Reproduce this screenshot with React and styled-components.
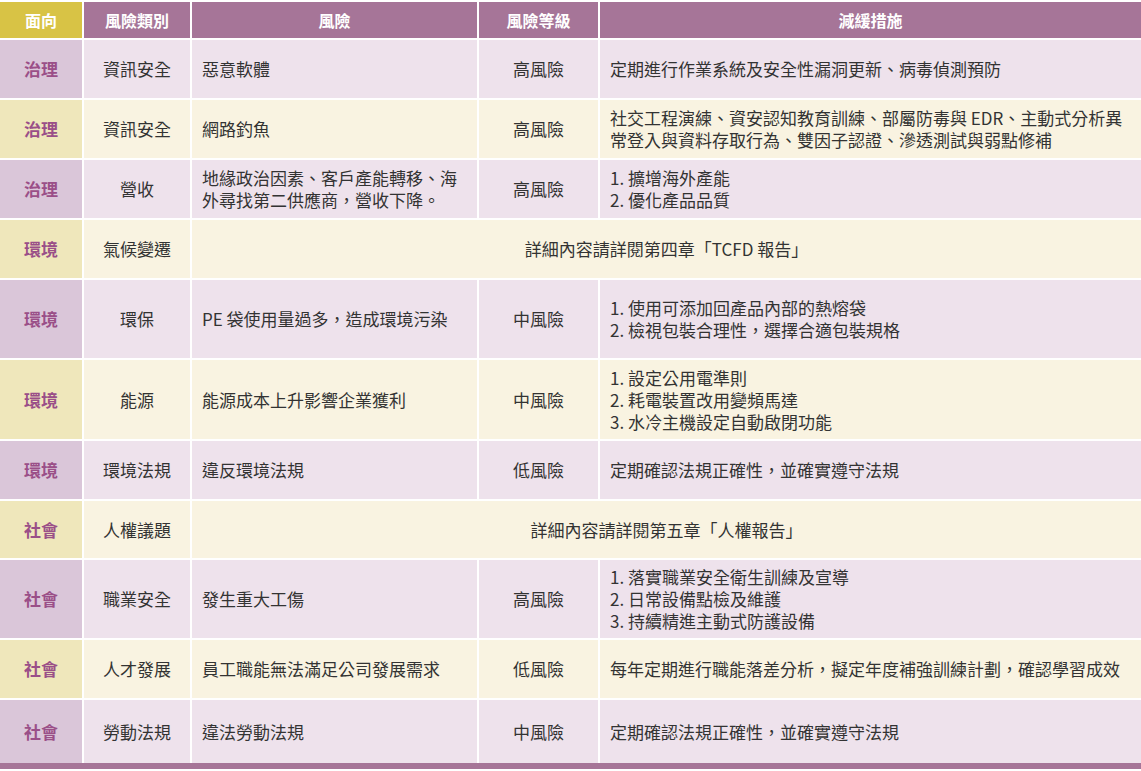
import React from "react";
import styled, { createGlobalStyle } from "styled-components";

const G = createGlobalStyle`
  html,body{margin:0;padding:0;background:#fff;}
  body{font-family:"Noto Sans CJK TC","Noto Sans CJK SC",sans-serif;}
`;
const Wrap = styled.div`padding-top:2px;width:1141px;`;
const Table = styled.table`
  width:1141px;border-collapse:collapse;table-layout:fixed;
  border-bottom:6px solid #a67598;
`;
const Th = styled.th`
  background:${p=>p.gold?"#d8c345":"#a67598"};color:#fff;font-weight:700;font-size:16px;
  height:36px;padding:0;border:2px solid #fff;border-top:0;line-height:1;
  &:first-child{border-left:0;} &:last-child{border-right:0;}
`;
const Td = styled.td`
  background:${p=>p.face?(p.alt?"#efe7bb":"#dac6d9"):(p.alt?"#f9f3e1":"#eee2ec")};
  color:${p=>p.face?"#9a4f88":"#333"};font-weight:${p=>p.face?700:400};
  font-size:17px;line-height:22px;border:2px solid #fff;
  text-align:${p=>p.left?"left":"center"};padding:0 ${p=>p.left?"8px 0 10px":"4px"};
  height:${p=>p.h}px;box-sizing:border-box;
  &:first-child{border-left:0;} &:last-child{border-right:0;}
`;
const rows=[
["治理","資訊安全","惡意軟體","高風險","定期進行作業系統及安全性漏洞更新、病毒偵測預防",60],
["治理","資訊安全","網路釣魚","高風險","社交工程演練、資安認知教育訓練、部屬防毒與 EDR、主動式分析異常登入與資料存取行為、雙因子認證、滲透測試與弱點修補",60],
["治理","營收","地緣政治因素、客戶產能轉移、海外尋找第二供應商，營收下降。","高風險",["1. 擴增海外產能","2. 優化產品品質"],60],
["環境","氣候變遷",null,null,"詳細內容請詳閱第四章「TCFD 報告」",60],
["環境","環保","PE 袋使用量過多，造成環境污染","中風險",["1. 使用可添加回產品內部的熱熔袋","2. 檢視包裝合理性，選擇合適包裝規格"],80],
["環境","能源","能源成本上升影響企業獲利","中風險",["1. 設定公用電準則","2. 耗電裝置改用變頻馬達","3. 水冷主機設定自動啟閉功能"],81],
["環境","環境法規","違反環境法規","低風險","定期確認法規正確性，並確實遵守法規",60],
["社會","人權議題",null,null,"詳細內容請詳閱第五章「人權報告」",59],
["社會","職業安全","發生重大工傷","高風險",["1. 落實職業安全衛生訓練及宣導","2. 日常設備點檢及維護","3. 持續精進主動式防護設備"],80],
["社會","人才發展","員工職能無法滿足公司發展需求","低風險","每年定期進行職能落差分析，擬定年度補強訓練計劃，確認學習成效",60],
["社會","勞動法規","違法勞動法規","中風險","定期確認法規正確性，並確實遵守法規",67],
];
export default function App(){
  return <Wrap><G/><Table>
    <colgroup><col style={{width:83}}/><col style={{width:108}}/><col style={{width:287}}/><col style={{width:121}}/><col/></colgroup>
    <thead><tr><Th gold>面向</Th><Th>風險類別</Th><Th>風險</Th><Th>風險等級</Th><Th>減緩措施</Th></tr></thead>
    <tbody>{rows.map((r,i)=>{const alt=i%2===1;const m=Array.isArray(r[4])?r[4].map((x,j)=><div key={j}>{x}</div>):r[4];
      return <tr key={i}>
        <Td face alt={alt} h={r[5]}>{r[0]}</Td>
        <Td alt={alt} h={r[5]}>{r[1]}</Td>
        {r[2]===null?<Td alt={alt} h={r[5]} colSpan={3}>{m}</Td>:<>
          <Td alt={alt} left h={r[5]}>{r[2]}</Td>
          <Td alt={alt} h={r[5]}>{r[3]}</Td>
          <Td alt={alt} left h={r[5]}>{m}</Td></>}
      </tr>})}</tbody>
  </Table></Wrap>;
}
